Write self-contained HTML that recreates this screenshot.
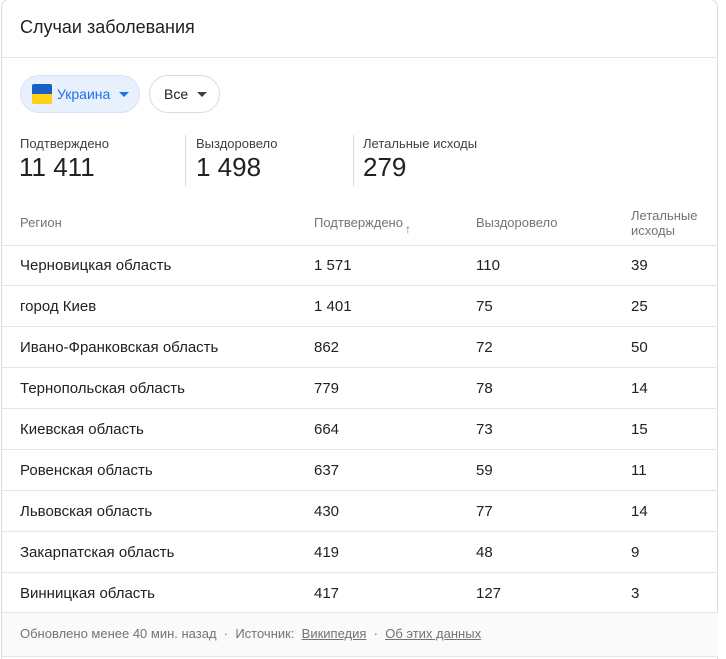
<!DOCTYPE html>
<html style="height:659px;overflow:hidden"><head><meta charset="utf-8"><style>
body{margin:0;background:#fff;font-family:"Liberation Sans",Arial,sans-serif;color:#202124;width:726px;height:659px;overflow:hidden;position:relative}
.card{position:absolute;left:1px;top:-1px;width:717px;height:670px;border:1px solid #dadce0;border-radius:8px;box-sizing:border-box}
.abs{position:absolute;white-space:nowrap}
.hline{position:absolute;left:2px;width:716px;height:1px;background:#e6e6e6}
.chip{position:absolute;top:75px;height:38px;border-radius:19px;box-sizing:border-box;font-size:14px;display:flex;align-items:center}
.tri{width:0;height:0;border-left:5px solid transparent;border-right:5px solid transparent;margin-left:9px}
.lbl{font-size:13px;color:#3c4043}
.big{font-size:26px;color:#202124}
.th{font-size:13px;color:#70757a}
.td{font-size:15px;color:#202124}
.foot{font-size:13px;color:#70757a}
</style></head><body>
<div class="card"></div>
<div class="abs" style="left:20px;top:17px;font-size:18px;color:#202124">Случаи заболевания</div>
<div class="hline" style="top:57px"></div>
<div class="chip" style="left:20px;width:120px;background:#e8f0fe;border:1px solid #d2e3fc;padding-left:11px;color:#1a73e8">
<div style="width:20px;height:20px;border-radius:2px;overflow:hidden;margin-right:5px"><div style="height:10px;background:#1a5fc4"></div><div style="height:10px;background:#fcd116"></div></div>Украина<div class="tri" style="border-top:5px solid #1a73e8"></div></div>
<div class="chip" style="left:149px;width:71px;border:1px solid #dadce0;padding-left:14px;color:#202124">Все<div class="tri" style="border-top:5px solid #3c4043"></div></div>
<div class="abs lbl" style="left:20px;top:136px">Подтверждено</div>
<div class="abs big" style="left:19px;top:152px">11 411</div>
<div class="abs" style="left:185px;top:135px;width:1px;height:52px;background:#dadce0"></div>
<div class="abs lbl" style="left:196px;top:136px">Выздоровело</div>
<div class="abs big" style="left:196px;top:152px">1 498</div>
<div class="abs" style="left:353px;top:135px;width:1px;height:52px;background:#dadce0"></div>
<div class="abs lbl" style="left:363px;top:136px">Летальные исходы</div>
<div class="abs big" style="left:363px;top:152px">279</div>
<div class="abs th" style="left:20px;top:215px">Регион</div>
<div class="abs th" style="left:314px;top:215px">Подтверждено<span style="font-size:12px;position:relative;top:6px;margin-left:2px">↑</span></div>
<div class="abs th" style="left:476px;top:215px">Выздоровело</div>
<div class="abs th" style="left:631px;top:208px;line-height:15px">Летальные<br>исходы</div>
<div class="hline" style="top:245px"></div>
<div id="rows"></div>
<div class="abs" style="left:2px;top:612px;width:716px;height:43px;background:#fafafa;border-top:1px solid #e6e6e6;border-bottom:1px solid #e6e6e6"></div>
<div class="abs foot" style="left:20px;top:626px">Обновлено менее 40 мин. назад &nbsp;·&nbsp; Источник: &nbsp;<u>Википедия</u> &nbsp;·&nbsp; <u>Об этих данных</u></div>
<script>
var d=[["Черновицкая область","1 571","110","39"],["город Киев","1 401","75","25"],["Ивано-Франковская область","862","72","50"],["Тернопольская область","779","78","14"],["Киевская область","664","73","15"],["Ровенская область","637","59","11"],["Львовская область","430","77","14"],["Закарпатская область","419","48","9"],["Винницкая область","417","127","3"]];
var h="";for(var i=0;i<d.length;i++){var t=246+i*41;var y=t+11;
h+='<div class="abs td" style="left:20px;top:'+y+'px">'+d[i][0]+'</div><div class="abs td" style="left:314px;top:'+y+'px">'+d[i][1]+'</div><div class="abs td" style="left:476px;top:'+y+'px">'+d[i][2]+'</div><div class="abs td" style="left:631px;top:'+y+'px">'+d[i][3]+'</div>';
if(i<d.length-1)h+='<div class="hline" style="top:'+(t+39)+'px"></div>';}
document.getElementById("rows").innerHTML=h;
</script>
</body></html>
